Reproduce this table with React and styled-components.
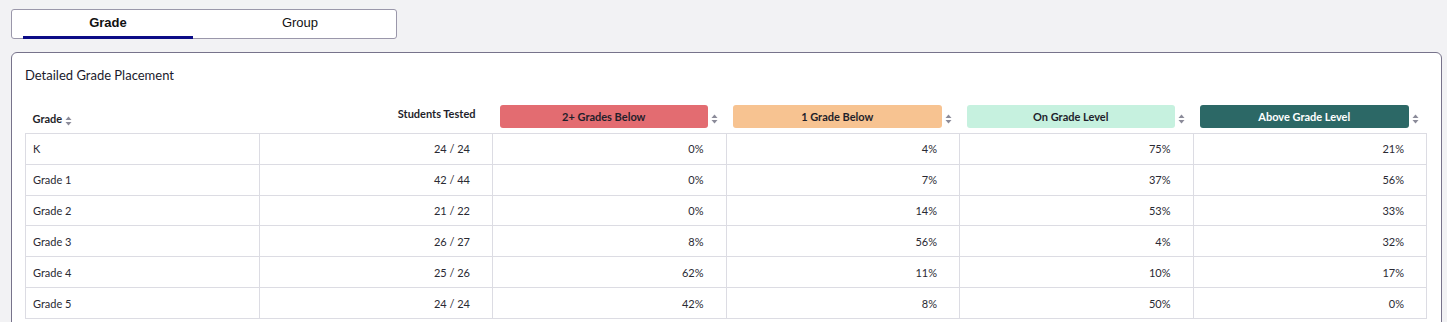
import React, { useState } from "react";
import styled, { createGlobalStyle } from "styled-components";

const GlobalStyle = createGlobalStyle`
  html, body {
    margin: 0;
    padding: 0;
    background: #f2f2f4;
  }
  body {
    font-family: Lato, "Open Sans", sans-serif;
    color: #1f1f2b;
  }
`;

const rows = [
  { grade: "K", tested: "24 / 24", values: ["0%", "4%", "75%", "21%"] },
  { grade: "Grade 1", tested: "42 / 44", values: ["0%", "7%", "37%", "56%"] },
  { grade: "Grade 2", tested: "21 / 22", values: ["0%", "14%", "53%", "33%"] },
  { grade: "Grade 3", tested: "26 / 27", values: ["8%", "56%", "4%", "32%"] },
  { grade: "Grade 4", tested: "25 / 26", values: ["62%", "11%", "10%", "17%"] },
  { grade: "Grade 5", tested: "24 / 24", values: ["42%", "8%", "50%", "0%"] },
];

const levels = [
  { label: "2+ Grades Below", bg: "#e36c71", fg: "#1f1f2b" },
  { label: "1 Grade Below", bg: "#f7c391", fg: "#1f1f2b" },
  { label: "On Grade Level", bg: "#c6f1df", fg: "#1f1f2b" },
  { label: "Above Grade Level", bg: "#2c6866", fg: "#ffffff" },
];

const SortIcon = () => (
  <SortSvg width="7" height="10" viewBox="0 0 7 10">
    <path d="M3.5 0.5 L6.5 4 L0.5 4 Z" fill="#8b8b99" />
    <path d="M3.5 9.5 L6.5 6 L0.5 6 Z" fill="#8b8b99" />
  </SortSvg>
);

const App = () => {
  const [tab, setTab] = useState("grade");
  return (
    <>
      <GlobalStyle />
      <Page>
        <TabBar>
          <Tab active={tab === "grade"} onClick={() => setTab("grade")}>
            Grade
          </Tab>
          <Tab active={tab === "group"} onClick={() => setTab("group")}>
            Group
          </Tab>
        </TabBar>
        <Panel>
          <Title>Detailed Grade Placement</Title>
          <Table>
            <colgroup>
              {[0, 1, 2, 3, 4, 5].map((i) => (
                <col key={i} style={{ width: `${100 / 6}%` }} />
              ))}
            </colgroup>
            <thead>
              <tr>
                <HeadCell>
                  <HeadLabel>
                    Grade <SortIcon />
                  </HeadLabel>
                </HeadCell>
                <HeadCell align="right">
                  <TestedLabel>Students Tested</TestedLabel>
                </HeadCell>
                {levels.map((l) => (
                  <HeadCell key={l.label}>
                    <BadgeWrap>
                      <Badge bg={l.bg} fg={l.fg}>
                        {l.label}
                      </Badge>
                      <SortIcon />
                    </BadgeWrap>
                  </HeadCell>
                ))}
              </tr>
            </thead>
            <tbody>
              {rows.map((r) => (
                <tr key={r.grade}>
                  <Cell>{r.grade}</Cell>
                  <Cell align="right">{r.tested}</Cell>
                  {r.values.map((v, i) => (
                    <Cell key={i} align="right">
                      {v}
                    </Cell>
                  ))}
                </tr>
              ))}
            </tbody>
          </Table>
        </Panel>
      </Page>
    </>
  );
};

const Page = styled.div`
  padding: 9px 5px 0 11px;
  display: flex;
  flex-direction: column;
  gap: 13px;
`;

const TabBar = styled.div`
  width: 386px;
  height: 30px;
  box-sizing: border-box;
  display: flex;
  justify-content: space-between;
  padding: 0 11px;
  background: #fff;
  border: 1px solid #9a97aa;
  border-radius: 3px;
`;

const Tab = styled.button`
  width: 170px;
  height: 29px;
  padding: 0 0 2px;
  border: none;
  border-bottom: 3px solid ${(p) => (p.active ? "#0b0b86" : "transparent")};
  background: transparent;
  font-family: "Liberation Sans", Arial, sans-serif;
  font-size: 13px;
  font-weight: ${(p) => (p.active ? 700 : 400)};
  color: #111;
  cursor: pointer;
`;

const Panel = styled.div`
  background: #fff;
  border: 1px solid #77738b;
  border-radius: 6px;
  padding: 14px 14px 20px 13px;
`;

const Title = styled.div`
  font-size: 13px;
  color: #1a1a2c;
  margin-bottom: 22px;
  line-height: 16px;
`;

const Table = styled.table`
  width: 100%;
  border-collapse: collapse;
  table-layout: fixed;
  font-size: 11px;
`;

const HeadCell = styled.th`
  text-align: ${(p) => p.align || "left"};
  padding: 0 7px 5px;
  font-weight: 700;
  vertical-align: bottom;
  border-bottom: 1px solid #dcdce3;
`;

const HeadLabel = styled.span`
  display: inline-flex;
  align-items: center;
  gap: 3px;
  padding-bottom: 2px;
`;

const TestedLabel = styled.span`
  display: inline-block;
  padding: 0 10px 8px 0;
`;

const BadgeWrap = styled.div`
  display: flex;
  align-items: center;
  gap: 3px;
  padding-right: 1px;
`;

const Badge = styled.div`
  flex: 1;
  height: 23px;
  border-radius: 3px;
  background: ${(p) => p.bg};
  color: ${(p) => p.fg};
  display: flex;
  align-items: center;
  justify-content: center;
  font-weight: 700;
  font-size: 11px;
`;

const SortSvg = styled.svg`
  flex: none;
  display: block;
  margin-top: 5px;
`;

const Cell = styled.td`
  height: 29.83px;
  padding: 0 22px 0 7px;
  text-align: ${(p) => p.align || "left"};
  border: 1px solid #dcdce3;
  color: #2a2a33;
`;

export default App;
